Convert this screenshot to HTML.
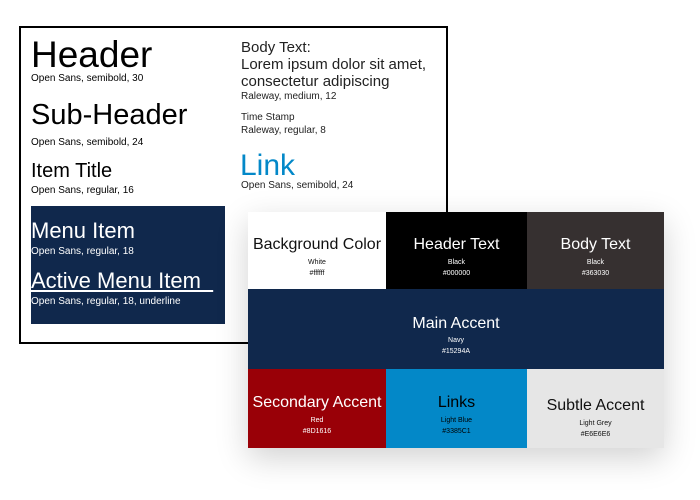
<!DOCTYPE html>
<html><head><style>
body{margin:0;width:700px;height:500px;background:#fff;position:relative;overflow:hidden;font-family:"Liberation Sans",sans-serif;color:#000}
.a{position:absolute;white-space:nowrap;line-height:1}
.frame{position:absolute;left:19px;top:26px;width:425px;height:314px;border:2px solid #000}
.card{position:absolute;left:248px;top:212px;width:416px;height:236px;box-shadow:0 10px 30px rgba(0,0,0,.18)}
.c{position:absolute;text-align:center;display:flex;flex-direction:column;justify-content:center;align-items:center;box-sizing:border-box;padding-top:14px}
.c .t{font-size:16px;line-height:1.1}
.c .s{font-size:7px;line-height:11px;margin-top:3px}
</style></head><body>
<div class="frame"></div>
<div class="a" style="left:31px;top:36px;font-size:37px">Header</div>
<div class="a" style="left:31px;top:74px;font-size:10px">Open Sans, semibold, 30</div>
<div class="a" style="left:31px;top:101px;font-size:29px">Sub-Header</div>
<div class="a" style="left:31px;top:138px;font-size:10px">Open Sans, semibold, 24</div>
<div class="a" style="left:31px;top:161px;font-size:20px">Item Title</div>
<div class="a" style="left:31px;top:186px;font-size:10px">Open Sans, regular, 16</div>
<div style="position:absolute;left:31px;top:206px;width:194px;height:118px;background:#10284c"></div>
<div class="a" style="left:31px;top:220px;font-size:22px;color:#fff">Menu Item</div>
<div class="a" style="left:31px;top:247px;font-size:10px;color:#fff">Open Sans, regular, 18</div>
<div class="a" style="left:31px;top:270px;font-size:22px;color:#fff;text-decoration:underline">Active Menu Item&nbsp;&nbsp;</div>
<div class="a" style="left:31px;top:297px;font-size:10px;color:#fff">Open Sans, regular, 18, underline</div>
<div class="a" style="left:241px;top:39px;font-size:15px;line-height:17px;color:#222">Body Text:<br>Lorem ipsum dolor sit amet,<br>consectetur adipiscing</div>
<div class="a" style="left:241px;top:92px;font-size:10px;color:#222">Raleway, medium, 12</div>
<div class="a" style="left:241px;top:113px;font-size:10px;color:#222">Time Stamp</div>
<div class="a" style="left:241px;top:126px;font-size:10px;color:#222">Raleway, regular, 8</div>
<div class="a" style="left:240px;top:151px;font-size:30px;color:#0388c8">Link</div>
<div class="a" style="left:241px;top:181px;font-size:10px;color:#222">Open Sans, semibold, 24</div>
<div class="card">
<div class="c" style="left:0;top:0;width:138px;height:77px;background:#fff;color:#111"><div class="t">Background Color</div><div class="s">White<br>#ffffff</div></div>
<div class="c" style="left:138px;top:0;width:141px;height:77px;background:#000;color:#fff"><div class="t">Header Text</div><div class="s">Black<br>#000000</div></div>
<div class="c" style="left:279px;top:0;width:137px;height:77px;background:#363030;color:#fff"><div class="t">Body Text</div><div class="s">Black<br>#363030</div></div>
<div class="c" style="left:0;top:77px;width:416px;height:80px;background:#10284c;color:#fff"><div class="t">Main Accent</div><div class="s">Navy<br>#15294A</div></div>
<div class="c" style="left:0;top:157px;width:138px;height:79px;background:#990007;color:#fff"><div class="t">Secondary Accent</div><div class="s">Red<br>#8D1616</div></div>
<div class="c" style="left:138px;top:157px;width:141px;height:79px;background:#0388c8;color:#000"><div class="t">Links</div><div class="s">Light Blue<br>#3385C1</div></div>
<div class="c" style="left:279px;top:157px;width:137px;height:79px;background:#e6e6e6;color:#111"><div class="t" style="margin-top:6px">Subtle Accent</div><div class="s">Light Grey<br>#E6E6E6</div></div>
</div>
</body></html>
